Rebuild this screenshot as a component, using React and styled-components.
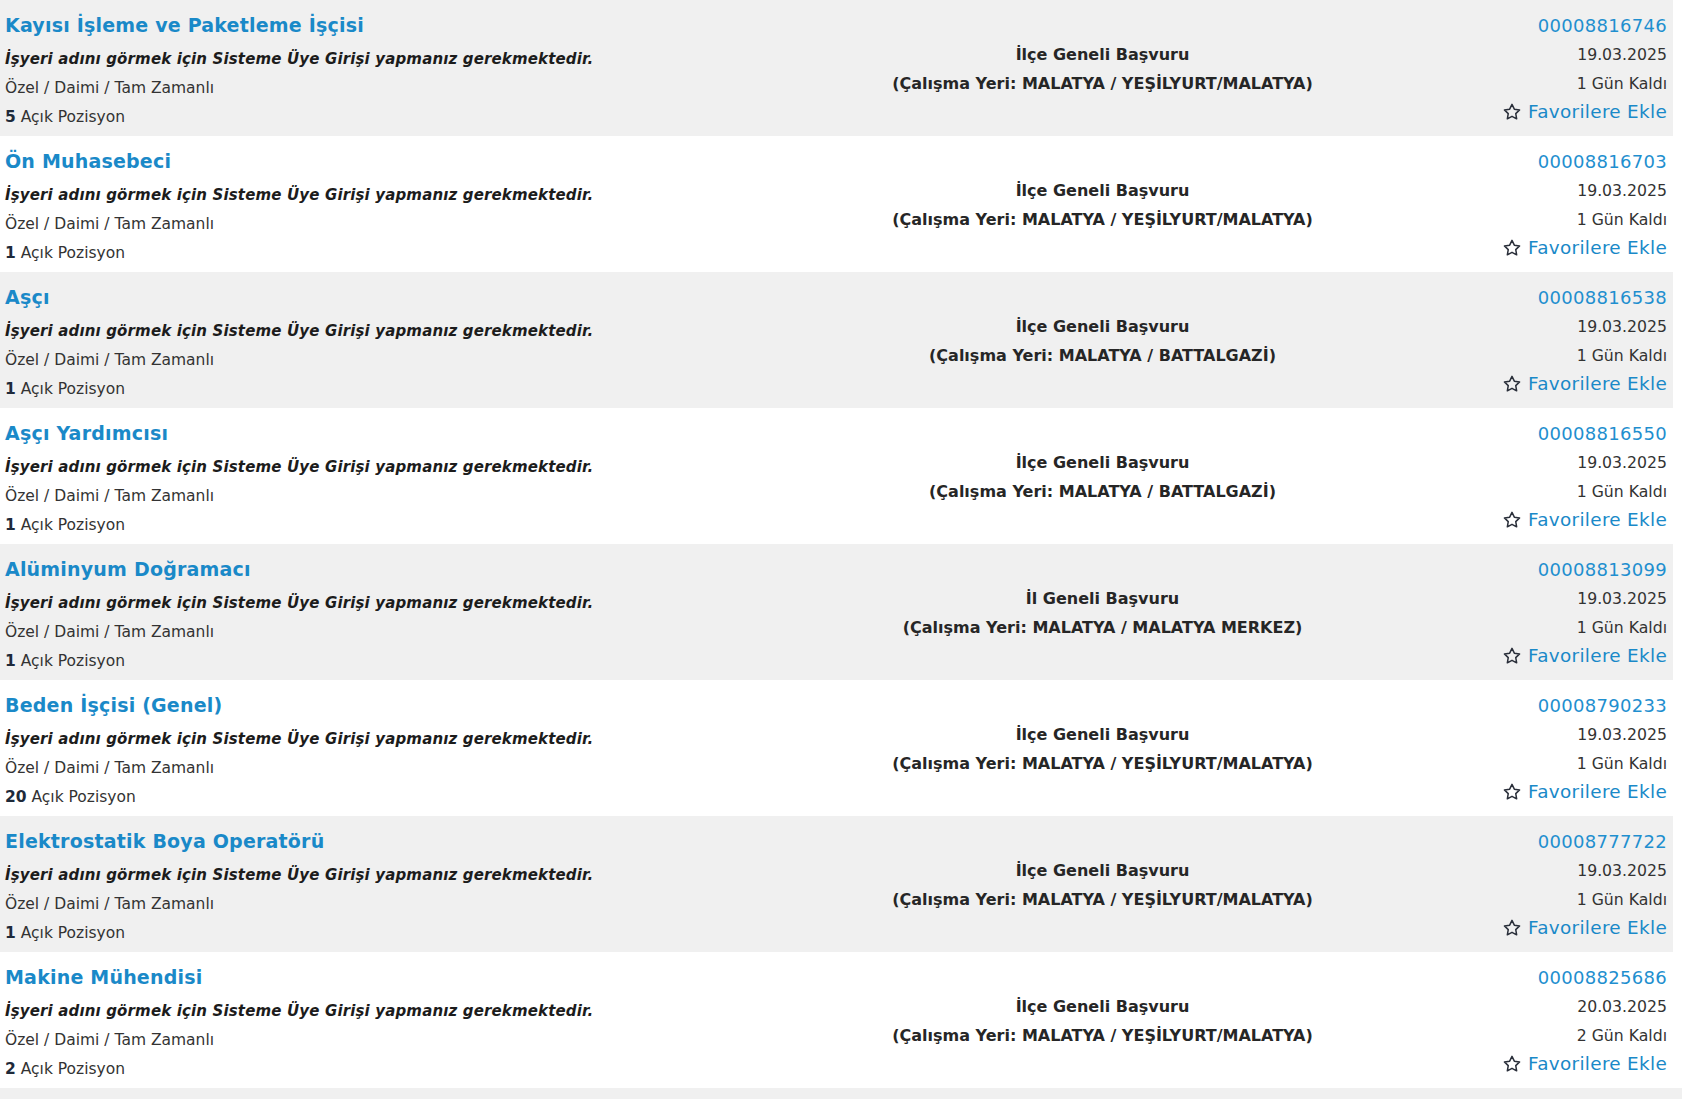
import styled, { createGlobalStyle } from 'styled-components'

const GlobalStyle = createGlobalStyle`
  html, body {
    margin: 0;
    padding: 0;
    background: #ffffff;
  }
  body {
    font-family: "DejaVu Sans", Verdana, sans-serif;
    color: #222;
  }
`

const List = styled.ul`
  list-style: none;
  margin: 0;
  padding: 0;
  width: 1673px;
`
const Row = styled.li`
  display: grid;
  grid-template-columns: 875px 445px 1fr;
  height: 136px;
  box-sizing: border-box;
  padding: 8px 6px 0 5px;
  background-color: ${(p) => (p.$shaded ? '#f0f0f0' : '#ffffff')};
`
const Tail = styled.div`
  height: 11px;
  background-color: #f0f0f0;
`
const Left = styled.div`
  display: flex;
  flex-direction: column;
`
const Title = styled.a`
  font-size: 19px;
  font-weight: 700;
  line-height: 34px;
  margin-bottom: 3px;
  color: #1a89c8;
  text-decoration: none;
  letter-spacing: 0.2px;
`
const Line = styled.div`
  font-size: ${(p) => (p.$italic ? '15px' : '15.5px')};
  line-height: 29px;
  color: ${(p) => p.$color || '#333'};
  font-weight: ${(p) => (p.$bold ? 700 : 400)};
  font-style: ${(p) => (p.$italic ? 'italic' : 'normal')};
  letter-spacing: ${(p) => (p.$italic ? '0.15px' : '0')};
`
const Count = styled.b`
  color: #1e2a3a;
`
const Middle = styled.div`
  display: flex;
  flex-direction: column;
  justify-content: center;
  align-items: center;
  margin-top: -6px;
  font-size: 16px;
  font-weight: 700;
  line-height: 29px;
  color: #262626;
  text-align: center;
`
const Right = styled.div`
  display: flex;
  flex-direction: column;
  align-items: flex-end;
  padding-top: 4px;
  font-size: 15.7px;
  line-height: 29px;
  color: #333;
`
const Code = styled.a`
  font-size: 18px;
  line-height: 28px;
  color: #1f8fcf;
  text-decoration: none;
  letter-spacing: 0.3px;
`
const Fav = styled.a`
  display: flex;
  align-items: center;
  gap: 6px;
  margin-top: -1px;
  font-size: 18.4px;
  color: #1a89c8;
  text-decoration: none;
  letter-spacing: 0.3px;
  svg {
    width: 20px;
    height: 20px;
  }
`

const Star = () => (
  <svg viewBox="0 0 24 24" fill="none" stroke="#2a2f3a" strokeWidth="1.8" strokeLinejoin="round">
    <path d="M12 2.8l2.8 5.8 6.3.9-4.6 4.4 1.1 6.3L12 17.2l-5.6 3 1.1-6.3-4.6-4.4 6.3-.9z" />
  </svg>
)

const jobs = [
  { title: 'Kayısı İşleme ve Paketleme İşçisi', count: 5, scope: 'İlçe Geneli Başvuru', place: 'MALATYA / YEŞİLYURT/MALATYA', code: '00008816746', date: '19.03.2025', left: 1 },
  { title: 'Ön Muhasebeci', count: 1, scope: 'İlçe Geneli Başvuru', place: 'MALATYA / YEŞİLYURT/MALATYA', code: '00008816703', date: '19.03.2025', left: 1 },
  { title: 'Aşçı', count: 1, scope: 'İlçe Geneli Başvuru', place: 'MALATYA / BATTALGAZİ', code: '00008816538', date: '19.03.2025', left: 1 },
  { title: 'Aşçı Yardımcısı', count: 1, scope: 'İlçe Geneli Başvuru', place: 'MALATYA / BATTALGAZİ', code: '00008816550', date: '19.03.2025', left: 1 },
  { title: 'Alüminyum Doğramacı', count: 1, scope: 'İl Geneli Başvuru', place: 'MALATYA / MALATYA MERKEZ', code: '00008813099', date: '19.03.2025', left: 1 },
  { title: 'Beden İşçisi (Genel)', count: 20, scope: 'İlçe Geneli Başvuru', place: 'MALATYA / YEŞİLYURT/MALATYA', code: '00008790233', date: '19.03.2025', left: 1 },
  { title: 'Elektrostatik Boya Operatörü', count: 1, scope: 'İlçe Geneli Başvuru', place: 'MALATYA / YEŞİLYURT/MALATYA', code: '00008777722', date: '19.03.2025', left: 1 },
  { title: 'Makine Mühendisi', count: 2, scope: 'İlçe Geneli Başvuru', place: 'MALATYA / YEŞİLYURT/MALATYA', code: '00008825686', date: '20.03.2025', left: 2 },
]

const App = () => (
  <>
    <GlobalStyle />
    <List>
      {jobs.map((job, i) => (
        <Row key={job.code} $shaded={i % 2 === 0}>
          <Left>
            <Title href="#">{job.title}</Title>
            <Line $italic $bold $color="#1c1c1c">
              İşyeri adını görmek için Sisteme Üye Girişi yapmanız gerekmektedir.
            </Line>
            <Line>Özel / Daimi / Tam Zamanlı</Line>
            <Line>
              <Count>{job.count}</Count> Açık Pozisyon
            </Line>
          </Left>
          <Middle>
            <div>{job.scope}</div>
            <div>(Çalışma Yeri: {job.place})</div>
          </Middle>
          <Right>
            <Code href="#">{job.code}</Code>
            <div>{job.date}</div>
            <div>{job.left} Gün Kaldı</div>
            <Fav href="#">
              <Star />
              Favorilere Ekle
            </Fav>
          </Right>
        </Row>
      ))}
    </List>
    <Tail />
  </>
)

export default App
